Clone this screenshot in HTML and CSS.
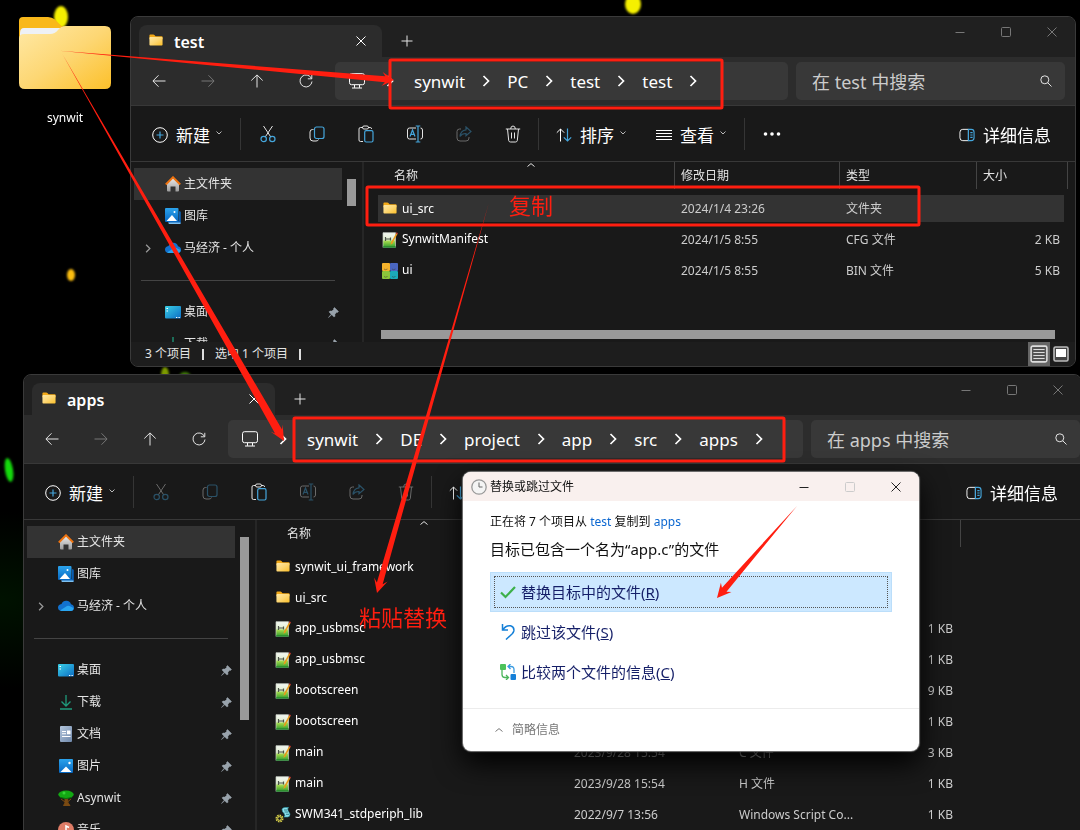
FILE: index.html
```html
<!DOCTYPE html>
<html lang="zh-CN">
<head>
<meta charset="utf-8">
<title>替换或跳过文件</title>
<link rel="stylesheet" href="styles.css">
</head>
<body>
<svg class="defs" aria-hidden="true">
  <defs>
    <linearGradient id="gFolder" x1="0" y1="0" x2="1" y2="1"><stop offset="0" stop-color="#ffe9a6"/><stop offset=".5" stop-color="#fdd774"/><stop offset="1" stop-color="#fcc02a"/></linearGradient>
    <linearGradient id="gSheet" x1="0" y1="0" x2="0" y2="1"><stop offset="0" stop-color="#f4f7f2"/><stop offset=".45" stop-color="#e2efd2"/><stop offset=".6" stop-color="#9bd64a"/><stop offset="1" stop-color="#2c9a2c"/></linearGradient>
    <linearGradient id="gBlue" x1="0" y1="0" x2="0" y2="1"><stop offset="0" stop-color="#2ba3ec"/><stop offset="1" stop-color="#0667c2"/></linearGradient>
    <linearGradient id="gDesk" x1="0" y1="0" x2="1" y2="1"><stop offset="0" stop-color="#3ad0e6"/><stop offset="1" stop-color="#0c6cc4"/></linearGradient>
    <linearGradient id="gDoc" x1="0" y1="0" x2="1" y2="1"><stop offset="0" stop-color="#b4c6dc"/><stop offset="1" stop-color="#6f88ab"/></linearGradient>
    <linearGradient id="gHome" x1="0" y1="0" x2="0" y2="1"><stop offset="0" stop-color="#f2f2f2"/><stop offset="1" stop-color="#9b9b9b"/></linearGradient>
  </defs>
  <symbol id="folder" viewBox="-1 0 18 16"><path d="M.5 1.500Q.5.500 1.500.5H5q.7 0 1.200.6L7.500 2.500h7q1 0 1 1V6H.5z" fill="#f3a917"/><rect x=".5" y="3.500" width="15" height="9.500" rx="1" fill="url(#gFolder)"/></symbol>
  <symbol id="close" viewBox="0 0 10 10"><path d="M.5.500l9 9M9.500.500l-9 9" class="ln"/></symbol>
  <symbol id="add" viewBox="0 0 12 12"><path d="M6 .5v11M.5 6h11" class="ln"/></symbol>
  <symbol id="min" viewBox="0 0 10 10"><path d="M.5 5.500h9" class="ln"/></symbol>
  <symbol id="max" viewBox="0 0 10 10"><rect x=".5" y=".5" width="9" height="9" rx="1" class="ln"/></symbol>
  <symbol id="back" viewBox="0 0 14 14"><path d="M13.500 7H1M6.500 1.300L.9 7l5.600 5.700" class="ln"/></symbol>
  <symbol id="fwd" viewBox="0 0 14 14"><path d="M.5 7H13M7.500 1.300L13.100 7l-5.600 5.700" class="ln"/></symbol>
  <symbol id="up" viewBox="0 0 14 14"><path d="M7 13.500V1M1.300 6.500L7 .9l5.700 5.600" class="ln"/></symbol>
  <symbol id="reload" viewBox="0 0 14 14"><path d="M12.500 4.500A6 6 0 1 0 13 7.500M12.800.8v4H8.800" class="ln"/></symbol>
  <symbol id="monitor" viewBox="0 0 18 16"><rect x="1.500" y=".7" width="15" height="11" rx="2" class="ln"/><path d="M6.500 12v2.800M11.500 12v2.800M4 15h10" class="ln"/></symbol>
  <symbol id="chev" viewBox="0 0 8 12"><path d="M1.500 1l5 5-5 5" fill="none" stroke="currentColor" stroke-width="1.700"/></symbol>
  <symbol id="down" viewBox="0 0 6 4"><path d="M.5.500L3 3 5.500.500" class="ln"/></symbol>
  <symbol id="caret" viewBox="0 0 8 4"><path d="M.5 3.500L4 .6l3.500 2.900" class="ln"/></symbol>
  <symbol id="find" viewBox="0 0 12 12"><circle cx="4.800" cy="4.800" r="4" class="ln"/><path d="M7.700 7.700l3.800 3.800" class="ln"/></symbol>
  <symbol id="new" viewBox="0 0 16 16"><circle cx="8" cy="8" r="7.300" class="ln"/><path d="M8 4.500v7M4.500 8h7" class="bl"/></symbol>
  <symbol id="cut" viewBox="0 0 16 18"><path d="M3.500 1l7.300 11M12.500 1L5.200 12" class="ln"/><circle cx="3.700" cy="14" r="2.700" class="bl"/><circle cx="12.300" cy="14" r="2.700" class="bl"/></symbol>
  <symbol id="copy" viewBox="0 0 16 16"><path d="M4.500 3.500h-1Q1 3.500 1 6v6q0 3 3 3h3q2 0 2.500-1.500" class="ln"/><rect x="5.500" y="1" width="9.500" height="11.500" rx="2" class="bl"/></symbol>
  <symbol id="paste" viewBox="0 0 16 18"><path d="M5 2.500H2.500Q1 2.500 1 4v11q0 1.500 1.500 1.500H5M10 2.500h2.500Q13.500 2.500 13.500 4" class="ln"/><rect x="4.500" y="1" width="6" height="3" rx="1.500" class="ln"/><rect x="6.700" y="5.700" width="8.300" height="11.300" rx="1.500" class="bl"/></symbol>
  <symbol id="rename" viewBox="0 0 18 18"><path d="M10 3H3.500Q1.500 3 1.500 5v7q0 2 2 2H10M14.500 3Q16.500 3 16.500 5v7q0 2-2 2" class="ln"/><path d="M12 1v16M9.700 1h4.600M9.700 17h4.600M4 11.500l2.500-6.500L9 11.500M5 9.300h3" class="bl"/></symbol>
  <symbol id="share" viewBox="0 0 16 16"><path d="M5 3H3.500Q1 3 1 5.500v6.500Q1 15 4 15h6q3 0 3-3v-1" class="ln"/><path d="M10 1l5 4.500-5 4.300V7.500Q6 7.300 4 10.500 4.500 4.500 10 3.800z" class="bl"/></symbol>
  <symbol id="trash" viewBox="0 0 16 18"><path d="M.8 4h14.400M5.700 4q0-3 2.300-3t2.300 3M2.500 4l1.200 11.500Q4 17 5.500 17h5q1.500 0 1.800-1.500L13.500 4M6.500 7.500v6M9.500 7.500v6" class="ln"/></symbol>
  <symbol id="sort" viewBox="0 0 16 14"><path d="M4.500 13.500V1M.8 4.700L4.500 1l3.700 3.700" class="ln"/><path d="M11.500.500V13M7.800 9.300l3.700 3.700 3.700-3.700" class="bl"/></symbol>
  <symbol id="lines" viewBox="0 0 16 12"><path d="M0 1.500h16M0 4.500h16M0 7.500h16M0 10.500h16" class="ln"/></symbol>
  <symbol id="dots" viewBox="0 0 18 4"><g fill="#fff"><circle cx="2.500" cy="2" r="1.800"/><circle cx="9" cy="2" r="1.800"/><circle cx="15.500" cy="2" r="1.800"/></g></symbol>
  <symbol id="pane" viewBox="0 0 17 14"><path d="M10 1H4Q1 1 1 4v6q0 3 3 3h6z" class="ln"/><path d="M10 1h3q3 0 3 3v6q0 3-3 3h-3zM12 4.500h2.500M12 7h2.500M12 9.500h2.500" class="bl"/></symbol>
  <symbol id="home" viewBox="0 0 16 16"><path d="M2 7l6-6 6 6v7.500q0 1-1 1h-2.500v-5h-5v5H3q-1 0-1-1z" fill="url(#gHome)"/><path d="M.8 8.500L8 1.300l7.200 7.200" fill="none" stroke="#ee7310" stroke-width="2"/></symbol>
  <symbol id="gallery" viewBox="0 0 16 16"><path d="M3 13h11V3l1.800.800V15.500H4.500z" fill="#0a5db0"/><path d="M3 14.500h12.500V16H4z" fill="#7fc1f0"/><rect width="13.500" height="14" rx="1" fill="url(#gBlue)"/><path d="M1.500 13L7 7l5 6z" fill="#fff"/><circle cx="9.500" cy="4" r="1" fill="#fff"/></symbol>
  <symbol id="picture" viewBox="0 0 16 16"><rect x="1" y="1" width="14" height="14" rx="1" fill="url(#gBlue)"/><path d="M2.500 14L8 8.500 13.500 14z" fill="#fff"/><circle cx="11.500" cy="5" r="1.200" fill="#fff"/></symbol>
  <symbol id="cloud" viewBox="0 0 16 16"><path d="M3.500 13Q0 12.500 0 9.500T3.500 6Q5 2.500 8.500 2.700T13 6.300q3 .7 3 3.500T13 13z" fill="#1272cf"/><path d="M2 12.500L9 8q1-.6 2.500 0l4 2Q15.500 13 13 13H3.500z" fill="#29a5f0"/></symbol>
  <symbol id="desk" viewBox="0 0 16 16"><rect y="2" width="16" height="12.500" rx="1" fill="url(#gDesk)"/><path d="M1.500 4h1.500v1H1.500zM1.500 6.500h1.500v1H1.500zM11 13h1.300v1H11zM13.500 13h1.300v1h-1.300z" fill="#fff"/></symbol>
  <symbol id="download" viewBox="0 0 16 16"><path d="M8 1v11M3.500 7.500L8 12l4.500-4.500M2 15h12" fill="none" stroke="#1f9b7c" stroke-width="1.300"/></symbol>
  <symbol id="doc" viewBox="0 0 16 16"><rect x="2" width="12" height="16" rx="1" fill="url(#gDoc)"/><path d="M4 5h4v1H4zM4 7.200h4v1H4zM9 4.500h3.500v3.700H9zM4 10h8.500v1H4z" fill="#fff"/></symbol>
  <symbol id="tree" viewBox="0 0 16 16"><path d="M7 8h2.500l.5 5 2 2.500H5.500L7 13zM3 9l4 3M13 9l-3.500 3" fill="#7a4a12" stroke="#7a4a12"/><ellipse cx="8" cy="4.500" rx="7.700" ry="4" fill="#13a813"/><path d="M2 7.500q6 2 12 0" stroke="#0a6e0a" fill="none"/><circle cx="6" cy="3" r="1.500" fill="#35d335"/></symbol>
  <symbol id="music" viewBox="0 0 16 16"><circle cx="8" cy="8" r="8" fill="#df7c66"/><path d="M8 10V4l3 1.500" stroke="#fff" stroke-width="1.500" fill="none"/><circle cx="6.500" cy="10.500" r="2" fill="#fff"/></symbol>
  <symbol id="pin" viewBox="0 0 11 11"><path d="M6.500.500l4 4-1 1-.7-.2-1.900 2 .1 1.900-.9.900L3.700 7.800.500 10.500l2.700-3.300L1 4.900l.9-.9 2 .1 1.900-1.900-.3-.7z" fill="#98a2ab" stroke="#98a2ab" stroke-width=".5"/></symbol>
  <symbol id="npp" viewBox="0 0 16 16"><path d="M1 .7h12.500V15.500H1z" fill="url(#gSheet)" stroke="#c8d0c4" stroke-width=".7"/><path d="M1 14.500h13v1.200H1z" fill="#1d7d2a"/><path d="M3.500 5v4M3.500 7h5M8.500 5.500v3" stroke="#4b5348" stroke-width="1.200" fill="none"/><path d="M14.300 1L9 10.500 8.500 13l2-1.700L15.500 2z" fill="#e99a1c"/><path d="M14.200.800l1.500 1" stroke="#c33" stroke-width="1.300"/></symbol>
  <symbol id="bin" viewBox="0 0 16 16"><rect width="8" height="8" rx="1" fill="#f4b22c"/><rect x="8" width="8" height="8" rx="1" fill="#4a66c0"/><rect y="8" width="8" height="8" rx="1" fill="#8bc53a"/><rect x="8" y="8" width="8" height="8" rx="1" fill="#1ba9b8"/><path d="M2 6l1.500.700L5.500 6M10 6l1.500.700L13.500 6M2 13.500l1.500.700 2-.7M10 13.500l1.500.700 2-.7" stroke="#333" stroke-opacity=".6" stroke-width=".8" fill="none"/></symbol>
  <symbol id="script" viewBox="0 0 16 16"><path d="M7 2q1-1.500 3-1.500h3.500q-1.500 1.500-.5 3l2 3.500q0 3-2.500 3H9q1.500-1.500.5-3L7.500 4.500z" fill="#8fe0ea" stroke="#2a9aad" stroke-width=".6"/><path d="M9 3h3M9.500 5h3.500M11 7.300h3" stroke="#156a7a" stroke-width=".8"/><circle cx="4.500" cy="11.500" r="3" fill="none" stroke="#d9d14a" stroke-width="2" stroke-dasharray="1.500 .8"/><circle cx="4.500" cy="11.500" r="1.800" fill="none" stroke="#d9d14a"/></symbol>
</svg>

<main class="desktop">
  <svg class="glow" width="700" height="500" aria-hidden="true">
    <g class="soft"><ellipse cx="61" cy="17" rx="7" ry="11" fill="#f5f000"/><ellipse cx="633" cy="4" rx="8" ry="10" fill="#f5f000"/><ellipse cx="71" cy="275" rx="4" ry="6" fill="#fbbd10"/><ellipse cx="9" cy="470" rx="4" ry="12" transform="rotate(-9 9 470)" fill="#14d80c"/><ellipse cx="165" cy="375" rx="4" ry="8" fill="#7d9a00"/><ellipse cx="185" cy="377" rx="6" ry="5" fill="#3f7a08"/></g>
  </svg>
  <figure class="shortcut">
    <svg width="94" height="74" viewBox="0 0 94 74" aria-hidden="true"><path d="M1 5Q1 1 5 1h25q4 0 7 2.500l7 7H60v20H1z" fill="#f9b81a"/><path d="M2 17q0-5 4-5h38l-8 8H2z" fill="#eef1f6"/><path d="M1 23q0-5 5-5h26q5 0 8-4 3-4 8-4h39q6 0 6 6v51q0 6-6 6H7q-6 0-6-6z" fill="url(#gFolder)"/></svg>
    <figcaption>synwit</figcaption>
  </figure>

  <section class="window win-a" aria-label="test">
    <header class="strip">
      <div class="tab"><svg class="i-tab"><use href="#folder"/></svg><span>test</span><button class="x" aria-label="关闭标签页"><svg class="i10"><use href="#close"/></svg></button></div>
      <button class="plus" aria-label="新标签页"><svg class="i12"><use href="#add"/></svg></button>
      <div class="controls"><button aria-label="最小化"><svg class="i10"><use href="#min"/></svg></button><button aria-label="最大化"><svg class="i10"><use href="#max"/></svg></button><button aria-label="关闭"><svg class="i10"><use href="#close"/></svg></button></div>
    </header>
    <nav class="nav">
      <button class="go" aria-label="后退"><svg class="i14"><use href="#back"/></svg></button><button class="go off" aria-label="前进"><svg class="i14"><use href="#fwd"/></svg></button><button class="go" aria-label="向上"><svg class="i14"><use href="#up"/></svg></button><button class="go" aria-label="刷新"><svg class="i14"><use href="#reload"/></svg></button>
      <div class="address"><svg class="i-mon"><use href="#monitor"/></svg><svg class="i-chev first"><use href="#chev"/></svg><a href="#">synwit</a><svg class="i-chev"><use href="#chev"/></svg><a href="#">PC</a><svg class="i-chev"><use href="#chev"/></svg><a href="#">test</a><svg class="i-chev"><use href="#chev"/></svg><a href="#">test</a><svg class="i-chev"><use href="#chev"/></svg></div>
      <label class="search"><input type="text" placeholder="在 test 中搜索" aria-label="在 test 中搜索"><svg class="i12"><use href="#find"/></svg></label>
    </nav>
    <div class="toolbar">
      <button class="cmd"><svg class="i16"><use href="#new"/></svg><span>新建</span><svg class="i-down"><use href="#down"/></svg></button>
      <i class="rule"></i>
      <button class="tool" aria-label="剪切"><svg class="i-tall"><use href="#cut"/></svg></button><button class="tool" aria-label="复制"><svg class="i16"><use href="#copy"/></svg></button><button class="tool" aria-label="粘贴"><svg class="i-tall"><use href="#paste"/></svg></button><button class="tool" aria-label="重命名"><svg class="i18"><use href="#rename"/></svg></button><button class="tool off" aria-label="共享"><svg class="i16"><use href="#share"/></svg></button><button class="tool" aria-label="删除"><svg class="i-tall"><use href="#trash"/></svg></button>
      <i class="rule near"></i>
      <button class="cmd"><svg class="i16"><use href="#sort"/></svg><span>排序</span><svg class="i-down"><use href="#down"/></svg></button>
      <button class="cmd next"><svg class="i16"><use href="#lines"/></svg><span>查看</span><svg class="i-down"><use href="#down"/></svg></button>
      <i class="rule"></i>
      <button class="tool" aria-label="更多"><svg class="i-dots"><use href="#dots"/></svg></button>
      <button class="cmd details"><svg class="i16"><use href="#pane"/></svg><span>详细信息</span></button>
    </div>
    <div class="body">
      <aside class="side">
        <ul>
          <li class="on"><span class="ex"></span><svg class="i16"><use href="#home"/></svg><span>主文件夹</span></li>
          <li><span class="ex"></span><svg class="i16"><use href="#gallery"/></svg><span>图库</span></li>
          <li><span class="ex"><svg class="i-ex"><use href="#chev"/></svg></span><svg class="i16"><use href="#cloud"/></svg><span>马经济 - 个人</span></li>
          <li class="sep"></li>
          <li><span class="ex"></span><svg class="i16"><use href="#desk"/></svg><span>桌面</span><svg class="i-pin"><use href="#pin"/></svg></li>
          <li><span class="ex"></span><svg class="i16"><use href="#download"/></svg><span>下载</span><svg class="i-pin"><use href="#pin"/></svg></li>
        </ul>
        <div class="track"><div class="thumb"></div></div>
      </aside>
      <div class="files">
        <table>
          <colgroup><col class="c-name"><col class="c-date"><col class="c-type"><col class="c-size"></colgroup>
          <thead><tr><th>名称<svg class="i-sort"><use href="#caret"/></svg></th><th>修改日期</th><th>类型</th><th>大小</th></tr></thead>
          <tbody>
            <tr class="on"><td><svg class="i-file"><use href="#folder"/></svg>ui_src</td><td>2024/1/4 23:26</td><td>文件夹</td><td></td></tr>
            <tr><td><svg class="i16"><use href="#npp"/></svg>SynwitManifest</td><td>2024/1/5 8:55</td><td>CFG 文件</td><td>2 KB</td></tr>
            <tr><td><svg class="i16"><use href="#bin"/></svg>ui</td><td>2024/1/5 8:55</td><td>BIN 文件</td><td>5 KB</td></tr>
          </tbody>
        </table>
        <div class="hbar"></div>
      </div>
    </div>
    <footer class="status"><span>3 个项目</span><i></i><span>选中 1 个项目</span><i></i>
      <div class="views"><button class="on" aria-label="详细信息视图"><svg width="18" height="18" viewBox="0 0 16 16"><rect x="1" y="1" width="14" height="14" rx="1.500" fill="#555" stroke="#ddd" stroke-width="1.400"/><path d="M3 4h10M3 6.700h10M3 9.300h10M3 12h10" stroke="#ddd"/></svg></button><button aria-label="大图标视图"><svg width="16" height="16" viewBox="0 0 16 16"><rect x="1" y="1" width="14" height="14" rx="1.500" fill="#444" stroke="#bbb" stroke-width="1.600"/><path d="M3 3h10v8H3z" fill="#fff"/></svg></button></div>
    </footer>
  </section>

  <section class="window win-b" aria-label="apps">
    <header class="strip">
      <div class="tab"><svg class="i-tab"><use href="#folder"/></svg><span>apps</span><button class="x" aria-label="关闭标签页"><svg class="i10"><use href="#close"/></svg></button></div>
      <button class="plus" aria-label="新标签页"><svg class="i12"><use href="#add"/></svg></button>
      <div class="controls"><button aria-label="最小化"><svg class="i10"><use href="#min"/></svg></button><button aria-label="最大化"><svg class="i10"><use href="#max"/></svg></button><button aria-label="关闭"><svg class="i10"><use href="#close"/></svg></button></div>
    </header>
    <nav class="nav">
      <button class="go" aria-label="后退"><svg class="i14"><use href="#back"/></svg></button><button class="go off" aria-label="前进"><svg class="i14"><use href="#fwd"/></svg></button><button class="go" aria-label="向上"><svg class="i14"><use href="#up"/></svg></button><button class="go" aria-label="刷新"><svg class="i14"><use href="#reload"/></svg></button>
      <div class="address"><svg class="i-mon"><use href="#monitor"/></svg><svg class="i-chev first"><use href="#chev"/></svg><a href="#">synwit</a><svg class="i-chev"><use href="#chev"/></svg><a href="#">DE</a><svg class="i-chev"><use href="#chev"/></svg><a href="#">project</a><svg class="i-chev"><use href="#chev"/></svg><a href="#">app</a><svg class="i-chev"><use href="#chev"/></svg><a href="#">src</a><svg class="i-chev"><use href="#chev"/></svg><a href="#">apps</a><svg class="i-chev"><use href="#chev"/></svg></div>
      <label class="search"><input type="text" placeholder="在 apps 中搜索" aria-label="在 apps 中搜索"><svg class="i12"><use href="#find"/></svg></label>
    </nav>
    <div class="toolbar">
      <button class="cmd"><svg class="i16"><use href="#new"/></svg><span>新建</span><svg class="i-down"><use href="#down"/></svg></button>
      <i class="rule"></i>
      <button class="tool off" aria-label="剪切"><svg class="i-tall"><use href="#cut"/></svg></button><button class="tool off" aria-label="复制"><svg class="i16"><use href="#copy"/></svg></button><button class="tool" aria-label="粘贴"><svg class="i-tall"><use href="#paste"/></svg></button><button class="tool off" aria-label="重命名"><svg class="i18"><use href="#rename"/></svg></button><button class="tool off" aria-label="共享"><svg class="i16"><use href="#share"/></svg></button><button class="tool off" aria-label="删除"><svg class="i-tall"><use href="#trash"/></svg></button>
      <i class="rule near"></i>
      <button class="cmd" aria-label="排序"><svg class="i16"><use href="#sort"/></svg></button>
      <button class="cmd details"><svg class="i16"><use href="#pane"/></svg><span>详细信息</span></button>
    </div>
    <div class="body">
      <aside class="side">
        <ul>
          <li class="on"><span class="ex"></span><svg class="i16"><use href="#home"/></svg><span>主文件夹</span></li>
          <li><span class="ex"></span><svg class="i16"><use href="#gallery"/></svg><span>图库</span></li>
          <li><span class="ex"><svg class="i-ex"><use href="#chev"/></svg></span><svg class="i16"><use href="#cloud"/></svg><span>马经济 - 个人</span></li>
          <li class="sep"></li>
          <li><span class="ex"></span><svg class="i16"><use href="#desk"/></svg><span>桌面</span><svg class="i-pin"><use href="#pin"/></svg></li>
          <li><span class="ex"></span><svg class="i16"><use href="#download"/></svg><span>下载</span><svg class="i-pin"><use href="#pin"/></svg></li>
          <li><span class="ex"></span><svg class="i16"><use href="#doc"/></svg><span>文档</span><svg class="i-pin"><use href="#pin"/></svg></li>
          <li><span class="ex"></span><svg class="i16"><use href="#picture"/></svg><span>图片</span><svg class="i-pin"><use href="#pin"/></svg></li>
          <li><span class="ex"></span><svg class="i16"><use href="#tree"/></svg><span>Asynwit</span><svg class="i-pin"><use href="#pin"/></svg></li>
          <li><span class="ex"></span><svg class="i16"><use href="#music"/></svg><span>音乐</span><svg class="i-pin"><use href="#pin"/></svg></li>
        </ul>
        <div class="track"><div class="thumb"></div></div>
      </aside>
      <div class="files">
        <table>
          <colgroup><col class="c-name"><col class="c-date"><col class="c-type"><col class="c-size"></colgroup>
          <thead><tr><th>名称<svg class="i-sort"><use href="#caret"/></svg></th><th></th><th></th><th></th></tr></thead>
          <tbody>
            <tr><td><svg class="i-file"><use href="#folder"/></svg>synwit_ui_framework</td><td></td><td></td><td></td></tr>
            <tr><td><svg class="i-file"><use href="#folder"/></svg>ui_src</td><td></td><td></td><td></td></tr>
            <tr><td><svg class="i16"><use href="#npp"/></svg>app_usbmsc</td><td></td><td></td><td>1 KB</td></tr>
            <tr><td><svg class="i16"><use href="#npp"/></svg>app_usbmsc</td><td></td><td></td><td>1 KB</td></tr>
            <tr><td><svg class="i16"><use href="#npp"/></svg>bootscreen</td><td></td><td></td><td>9 KB</td></tr>
            <tr><td><svg class="i16"><use href="#npp"/></svg>bootscreen</td><td></td><td></td><td>1 KB</td></tr>
            <tr><td><svg class="i16"><use href="#npp"/></svg>main</td><td>2023/9/28 15:54</td><td>C 文件</td><td>3 KB</td></tr>
            <tr><td><svg class="i16"><use href="#npp"/></svg>main</td><td>2023/9/28 15:54</td><td>H 文件</td><td>1 KB</td></tr>
            <tr><td><svg class="i16"><use href="#script"/></svg>SWM341_stdperiph_lib</td><td>2022/9/7 13:56</td><td>Windows Script Co...</td><td>1 KB</td></tr>
          </tbody>
        </table>
      </div>
    </div>
  </section>

  <section class="dialog" role="dialog" aria-labelledby="dlg-title">
    <header>
      <svg width="16" height="16" viewBox="0 0 16 16" aria-hidden="true"><circle cx="8" cy="8" r="7.200" fill="#f4f4f4" stroke="#999" stroke-width="1.300"/><path d="M8 3.500V8h3.500" fill="none" stroke="#666"/></svg>
      <h1 id="dlg-title">替换或跳过文件</h1>
      <div class="controls"><button aria-label="最小化"><svg class="i10"><use href="#min"/></svg></button><button class="dim" aria-label="最大化" disabled><svg class="i10"><use href="#max"/></svg></button><button aria-label="关闭"><svg class="i10"><use href="#close"/></svg></button></div>
    </header>
    <div class="content">
      <p>正在将 7 个项目从 <a href="#">test</a> 复制到 <a href="#">apps</a></p>
      <h2>目标已包含一个名为“app.c”的文件</h2>
      <button class="choice on"><span><svg width="16" height="16" viewBox="0 0 16 16"><path d="M1 8.500l4.500 4.500L15 3" fill="none" stroke="#3db04a" stroke-width="2.200"/></svg>替换目标中的文件(<u>R</u>)</span></button>
      <button class="choice"><span><svg width="16" height="16" viewBox="0 0 16 16"><path d="M2.500 0v6H8M2.700 5.800Q6 1 10.500 1.800 14.500 3 13.800 7 13.500 8.500 12 10l-6 5.500" fill="none" stroke="#1580d8" stroke-width="1.500"/></svg>跳过该文件(<u>S</u>)</span></button>
      <button class="choice"><span><svg width="16" height="16" viewBox="0 0 16 16"><rect width="6" height="6" rx="1" fill="#4cc25a"/><rect x="10.500" y="10" width="5.500" height="6" rx="1" fill="#1580d8"/><path d="M2 6v4.500Q2 13.500 5 13.500h3M6 11l2.500 2.500L6 16" fill="none" stroke="#4cb55a" stroke-width="1.300"/><path d="M14 9V5.500Q14 2.500 11 2.500H8.500M10.500 0L8 2.500 10.500 5" fill="none" stroke="#3a9be0" stroke-width="1.300"/></svg>比较两个文件的信息(<u>C</u>)</span></button>
    </div>
    <footer><button><svg width="8" height="4"><use href="#caret"/></svg>简略信息</button></footer>
  </section>

  <svg class="marks" width="1080" height="830" aria-hidden="true">
    <g class="frame"><rect x="390" y="60" width="332" height="48" rx="1"/><rect x="367" y="187" width="552" height="38" rx="1"/><rect x="294" y="418" width="490" height="43" rx="1"/></g>
    <g class="arrow">
      <path transform="translate(394 80) rotate(5)" d="M-336 0L-9-3l-3-4L0 0-12 7l3-4z"/>
      <path transform="translate(284 441) rotate(60.200)" d="M-446 0L-11-4l-4-3L0 0-15 7l4-3z"/>
      <path transform="translate(377 593) rotate(106)" d="M-405 0L-10-3l-4-4L0 0-14 7l4-4z"/>
      <path transform="translate(717 598) rotate(131)" d="M-122 0L-11-3l-3-4L0 0-14 7l3-4z"/>
    </g>
    <text x="509" y="214">复制</text>
    <text x="359" y="626">粘贴替换</text>
  </svg>
</main>
</body>
</html>
```

FILE: styles.css
```css
* { box-sizing: border-box; }
body {
  margin: 0;
  background: #000;
  color: #e4e4e4;
  font: 12px/16px "Noto Sans", "Noto Sans CJK SC", sans-serif;
}
button {
  display: flex;
  align-items: center;
  justify-content: center;
  padding: 0;
  border: 0;
  background: none;
  color: inherit;
  font: inherit;
}
a { color: inherit; text-decoration: none; }
svg { display: block; flex: none; }
ul, figure, h1, h2, p { margin: 0; padding: 0; }
.defs { position: absolute; width: 0; height: 0; }
.ln { fill: none; stroke: currentColor; }
.bl { fill: none; stroke: #45a6dc; stroke-width: 1.200px; }

.i10 { width: 10px; height: 10px; }
.i12 { width: 12px; height: 12px; }
.i14 { width: 14px; height: 14px; }
.i16 { width: 16px; height: 16px; }
.i18 { width: 18px; height: 18px; }
.i-tall { width: 16px; height: 18px; }
.i-tab, .i-file { width: 16px; height: 14px; }
.i-mon { width: 18px; height: 16px; }
.i-chev { width: 8px; height: 12px; }
.i-ex { width: 6px; height: 9px; }
.i-down { width: 6px; height: 4px; }
.i-dots { width: 18px; height: 4px; }
.i-pin { width: 11px; height: 11px; }

.desktop {
  position: relative;
  height: 100vh;
  overflow: hidden;
  background: radial-gradient(ellipse at 0 600px, #001200, #000 160px);
}
.glow { position: absolute; top: 0; left: 0; }
.soft { filter: blur(1px); }
.shortcut { position: absolute; top: 16px; left: 18px; width: 94px; text-align: center; }
.shortcut figcaption { padding-top: 20px; color: #fff; }

.window {
  position: absolute;
  display: flex;
  flex-direction: column;
  overflow: hidden;
  border: 1px solid #3a3a3a;
  border-radius: 8px;
  background: #191919;
}
.win-a { top: 16px; left: 130px; right: 4px; height: 351px; }
.win-b { top: 374px; left: 23px; right: -2px; bottom: -30px; }

.strip { display: flex; flex: none; height: 40px; background: #202020; }
.tab {
  display: flex;
  align-items: center;
  gap: 10px;
  width: 243px;
  margin: 8px 0 0 8px;
  padding: 0 16px 0 9px;
  border-radius: 8px 8px 0 0;
  background: #2c2c2c;
  color: #fff;
  font-size: 16px;
  font-weight: 600;
}
.tab span { padding-top: 2px; }
.tab .x { margin-left: auto; }
.plus { width: 49px; padding-top: 8px; }
.controls { display: flex; height: 30px; margin-left: auto; }
.controls button { width: 46px; color: #777; }

.nav {
  display: flex;
  flex: none;
  height: 49px;
  padding: 5px 10px 5px 3px;
  border-bottom: 1px solid #383838;
  background: #2c2c2c;
}
.win-b .nav { padding-right: 1px; }
.go { width: 49px; }
.off { opacity: .4; }
.address {
  display: flex;
  flex: 1;
  align-items: center;
  gap: 17px;
  margin: 0 8px 0 5px;
  padding-left: 13px;
  border-radius: 5px;
  background: #383838;
  color: #fff;
  font-size: 17px;
  line-height: 24px;
  white-space: nowrap;
}
.address a { padding-top: 2px; }
.address .first { margin: 0 3px; }
.search {
  display: flex;
  align-items: center;
  width: 269px;
  padding: 0 13px 0 16px;
  border-radius: 5px;
  background: #383838;
}
.search input {
  flex: 1;
  min-width: 0;
  padding: 2px 0 0;
  border: 0;
  outline: 0;
  background: none;
  color: #ccc;
  font: 18px/24px "Noto Sans", "Noto Sans CJK SC", sans-serif;
}
.search input::placeholder { color: #ccc; }

.toolbar {
  display: flex;
  flex: none;
  align-items: center;
  height: 56px;
  padding: 0 24px 0 21px;
  border-bottom: 1px solid #383838;
}
.win-b .toolbar { padding-right: 23px; }
.cmd { gap: 8px; padding-top: 2px; color: #fff; font-size: 17px; line-height: 24px; }
.cmd span { padding-top: 3px; }
.cmd.next { margin-left: 30px; }
.cmd .i-down { margin: -4px 0 0 -2px; opacity: .7; }
.details { margin-left: auto; }
.rule { width: 1px; height: 32px; margin: 0 2px 0 18px; background: #353535; }
.rule.near { margin: 0 17px 0 1px; }
.tool { width: 49px; }

.body { display: flex; flex: 1; min-height: 0; overflow: hidden; }
.side { display: flex; flex: none; width: 233px; padding: 6px 0 0 3px; border-right: 2px solid #262626; }
.side ul { width: 208px; list-style: none; }
.side li { display: flex; align-items: center; gap: 3px; height: 32px; padding-right: 3px; }
.side .on { background: #333; }
.side .ex { display: flex; justify-content: center; width: 28px; color: #999; }
.side .i-pin { margin-left: auto; }
.side .sep::before { content: ""; flex: 1; height: 1px; margin: 0 4px 0 7px; background: #444; }
.track { padding: 11px 0 0 5px; }
.thumb { width: 9px; height: 27px; background: #999; }
.win-b .thumb { height: 183px; }

.files { display: flex; flex: 1; flex-direction: column; min-width: 0; padding-left: 14px; }
table { width: 690px; border-spacing: 0; table-layout: fixed; }
.c-name { width: 297px; }
.c-date { width: 165px; }
.c-type { width: 137px; }
.c-size { width: 91px; }
th {
  position: relative;
  height: 31px;
  padding: 0 0 4px 6px;
  background: linear-gradient(#444, #444) right top / 1px 27px no-repeat;
  font-weight: 400;
  text-align: left;
}
th:first-child { padding-left: 16px; }
.i-sort { position: absolute; top: 1px; left: 149px; width: 8px; height: 4px; }
td {
  height: 31px;
  padding: 0 0 0 6px;
  border: solid transparent;
  border-width: 2px 0;
  background-clip: padding-box;
  color: #ccc;
  white-space: nowrap;
}
td:first-child { padding-left: 4px; color: #fff; }
td:last-child { padding-right: 4px; border-right-width: 4px; text-align: right; }
td svg { display: inline-block; margin-right: 4px; vertical-align: middle; }
tr.on td { background-color: #333; }
.hbar { height: 9px; margin: auto 20px 3px 3px; background: #999; }

.status { display: flex; flex: none; align-items: center; gap: 11px; height: 24px; padding: 0 3px 0 14px; background: #1d1d1d; }
.status i { width: 2px; height: 11px; background: #ddd; }
.views { display: flex; margin-left: auto; }
.views button { width: 22px; height: 24px; }
.views .on { background: #666; }

.dialog {
  position: absolute;
  top: 472px;
  left: 463px;
  width: 456px;
  overflow: hidden;
  border-radius: 8px;
  background: #fff;
  box-shadow: 0 0 1px 1px #777, 0 12px 28px #000;
  color: #111;
}
.dialog header { display: flex; align-items: center; gap: 3px; height: 29px; padding-left: 8px; background: #f9f0ee; }
.dialog h1 { font-size: 12px; font-weight: 400; }
.dialog .controls button { color: #222; }
.dialog .controls .dim { color: #ccc; }
.content { height: 208px; padding: 13px 27px 0; border-bottom: 1px solid #ececec; }
.content a { color: #0a66d0; }
.content h2 { padding: 7px 0 11px; font-size: 15px; font-weight: 400; line-height: 24px; }
.choice { width: 100%; height: 40px; padding: 4px; color: #151f68; font-size: 15px; line-height: 24px; text-align: left; }
.choice span { display: flex; flex: 1; align-items: center; height: 32px; padding-left: 5px; border: 1px solid transparent; }
.choice svg { margin-right: 5px; }
.choice.on { background: #cce8ff; outline: 1px solid #bbdefa; outline-offset: -1px; }
.choice.on span { border: 1px dotted #555; }
.dialog footer { display: flex; align-items: center; height: 42px; padding-left: 32px; color: #777; }
.dialog footer button { gap: 9px; }

.marks { position: absolute; top: 0; left: 0; pointer-events: none; }
.frame rect { fill: none; stroke: #ff1e10; stroke-width: 3px; }
.arrow path { fill: #ff1e10; }
.marks text { fill: #ff1e10; font: 22px "Noto Sans CJK SC", sans-serif; }
```
